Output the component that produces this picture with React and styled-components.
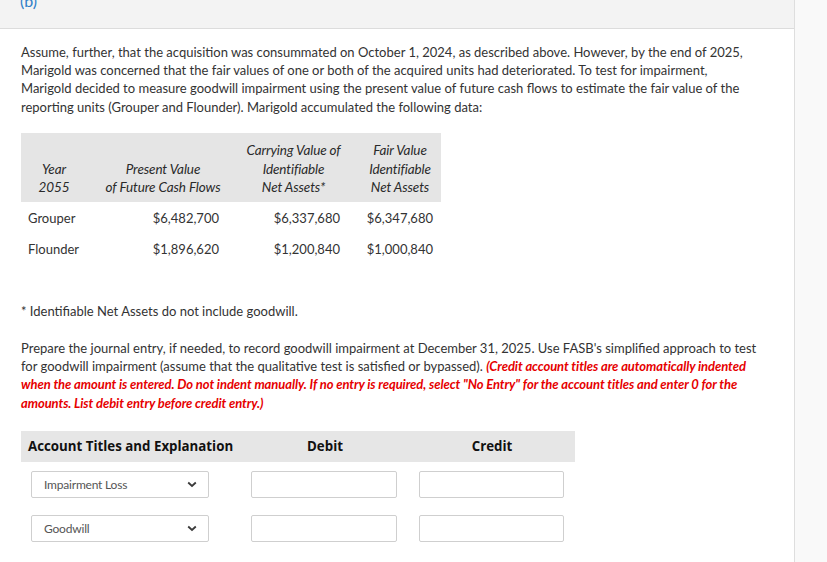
import React from "react";
import styled, { createGlobalStyle } from "styled-components";

const Global = createGlobalStyle`
  html, body { margin: 0; padding: 0; background: #fff; }
  body { font-family: Lato, "Open Sans", Arial, sans-serif; color: #333; }
`;

const Page = styled.div`
  display: flex;
  min-height: 562px;
`;

const Main = styled.div`
  width: 794px;
  border-right: 1px solid #dedede;
  background: #fff;
`;

const Side = styled.div`
  flex: 1;
  background: #f9f9f9;
`;

const TopBand = styled.div`
  height: 28px;
  background: #f3f3f3;
  border-bottom: 1px solid #dcdcdc;
  overflow: hidden;
  padding-left: 20px;
`;

const PartLabel = styled.div`
  margin-top: -9px;
  font-size: 16px;
  line-height: 20px;
  color: #2f80c8;
`;

const Content = styled.div`
  padding: 14px 35px 0 21px;
`;

const Para = styled.p`
  margin: ${(p) => p.$mt || 0}px 0 0;
  font-size: 13px;
  line-height: 18.2px;
  color: #333;
`;

const Red = styled.span`
  color: #e60000;
  font-style: italic;
  font-weight: 700;
  letter-spacing: -0.08px;
`;

const DataTable = styled.div`
  margin-top: 17px;
  width: 420px;
  display: grid;
  grid-template-columns: 66px 139px 121px 94px;
`;

const HeadCell = styled.div`
  background: #e5e5e5;
  height: 69px;
  box-sizing: border-box;
  display: flex;
  flex-direction: column;
  justify-content: flex-end;
  align-items: center;
  text-align: center;
  white-space: nowrap;
  padding: 0 ${(p) => p.$pr || 7}px 5px ${(p) => p.$pl || 7}px;
  font-size: 13.5px;
  font-style: italic;
  line-height: 18.5px;
  letter-spacing: -0.1px;
  color: #2a2a2a;
`;

const Cell = styled.div`
  height: 31px;
  box-sizing: border-box;
  display: flex;
  align-items: center;
  justify-content: ${(p) => (p.$left ? "flex-start" : "flex-end")};
  padding: 2px ${(p) => p.$pr || 7}px 0 7px;
  font-size: 13px;
  color: #333;
`;

const Journal = styled.div`
  margin-top: 19px;
  width: 554px;
  display: grid;
  grid-template-columns: 220px 168px 166px;
`;

const JHead = styled.div`
  background: #e6e6e6;
  height: 31px;
  display: flex;
  align-items: center;
  justify-content: ${(p) => (p.$left ? "flex-start" : "center")};
  padding-left: ${(p) => (p.$left ? "7px" : "0")};
  font-family: "Open Sans", "DejaVu Sans", sans-serif;
  font-weight: 700;
  font-size: 13.3px;
  color: #111;
`;

const JCell = styled.div`
  padding: ${(p) => (p.$first ? 9 : 17)}px 0 0 10px;
`;

const SelectBox = styled.div`
  width: 178px;
  height: 27px;
  box-sizing: border-box;
  border: 1px solid #cfcfcf;
  border-radius: 2px;
  background: #fff;
  display: flex;
  align-items: center;
  justify-content: space-between;
  padding: 0 11px 0 12px;
  font-size: 12px;
  color: #555;
  letter-spacing: -0.2px;
`;

const Field = styled.div`
  width: ${(p) => p.$w}px;
  height: 27px;
  box-sizing: border-box;
  border: 1px solid #cfcfcf;
  border-radius: 2px;
  background: #fff;
`;

const Chevron = () => (
  <svg width="10" height="7" viewBox="0 0 10 7">
    <path d="M1.2 1.5 L5 5 L8.8 1.5" fill="none" stroke="#3a3a3a" strokeWidth="1.8" />
  </svg>
);

const rows = [
  ["Grouper", "$6,482,700", "$6,337,680", "$6,347,680"],
  ["Flounder", "$1,896,620", "$1,200,840", "$1,000,840"],
];

const entries = ["Impairment Loss", "Goodwill"];

export default function App() {
  return (
    <>
      <Global />
      <Page>
        <Main>
          <TopBand>
            <PartLabel>(b)</PartLabel>
          </TopBand>
          <Content>
            <Para>
              Assume, further, that the acquisition was consummated on October 1, 2024, as described above. However, by the end of 2025, Marigold was concerned that the fair values of one or both of the acquired units had deteriorated. To test for impairment, Marigold decided to measure goodwill impairment using the present value of future cash flows to estimate the fair value of the reporting units (Grouper and Flounder). Marigold accumulated the following data:
            </Para>
            <DataTable>
              <HeadCell>
                <span>Year</span>
                <span>2055</span>
              </HeadCell>
              <HeadCell $pl={20}>
                <span>Present Value</span>
                <span>of Future Cash Flows</span>
              </HeadCell>
              <HeadCell $pl={21}>
                <span>Carrying Value of</span>
                <span>Identifiable</span>
                <span>Net Assets*</span>
              </HeadCell>
              <HeadCell $pl={20} $pr={8}>
                <span>Fair Value</span>
                <span>Identifiable</span>
                <span>Net Assets</span>
              </HeadCell>
              {rows.map((r) => (
                <React.Fragment key={r[0]}>
                  <Cell $left>{r[0]}</Cell>
                  <Cell>{r[1]}</Cell>
                  <Cell>{r[2]}</Cell>
                  <Cell $pr={8}>{r[3]}</Cell>
                </React.Fragment>
              ))}
            </DataTable>
            <Para $mt={38}>* Identifiable Net Assets do not include goodwill.</Para>
            <Para $mt={19}>
              Prepare the journal entry, if needed, to record goodwill impairment at December 31, 2025. Use FASB's simplified approach to test for goodwill impairment (assume that the qualitative test is satisfied or bypassed).{" "}
              <Red>
                (Credit account titles are automatically indented when the amount is entered. Do not indent manually. If no entry is required, select "No Entry" for the account titles and enter 0 for the amounts. List debit entry before credit entry.)
              </Red>
            </Para>
            <Journal>
              <JHead $left>Account Titles and Explanation</JHead>
              <JHead>Debit</JHead>
              <JHead>Credit</JHead>
              {entries.map((e, i) => (
                <React.Fragment key={e}>
                  <JCell $first={i === 0}>
                    <SelectBox>
                      <span>{e}</span>
                      <Chevron />
                    </SelectBox>
                  </JCell>
                  <JCell $first={i === 0}>
                    <Field $w={146} />
                  </JCell>
                  <JCell $first={i === 0}>
                    <Field $w={145} />
                  </JCell>
                </React.Fragment>
              ))}
            </Journal>
          </Content>
        </Main>
        <Side />
      </Page>
    </>
  );
}
